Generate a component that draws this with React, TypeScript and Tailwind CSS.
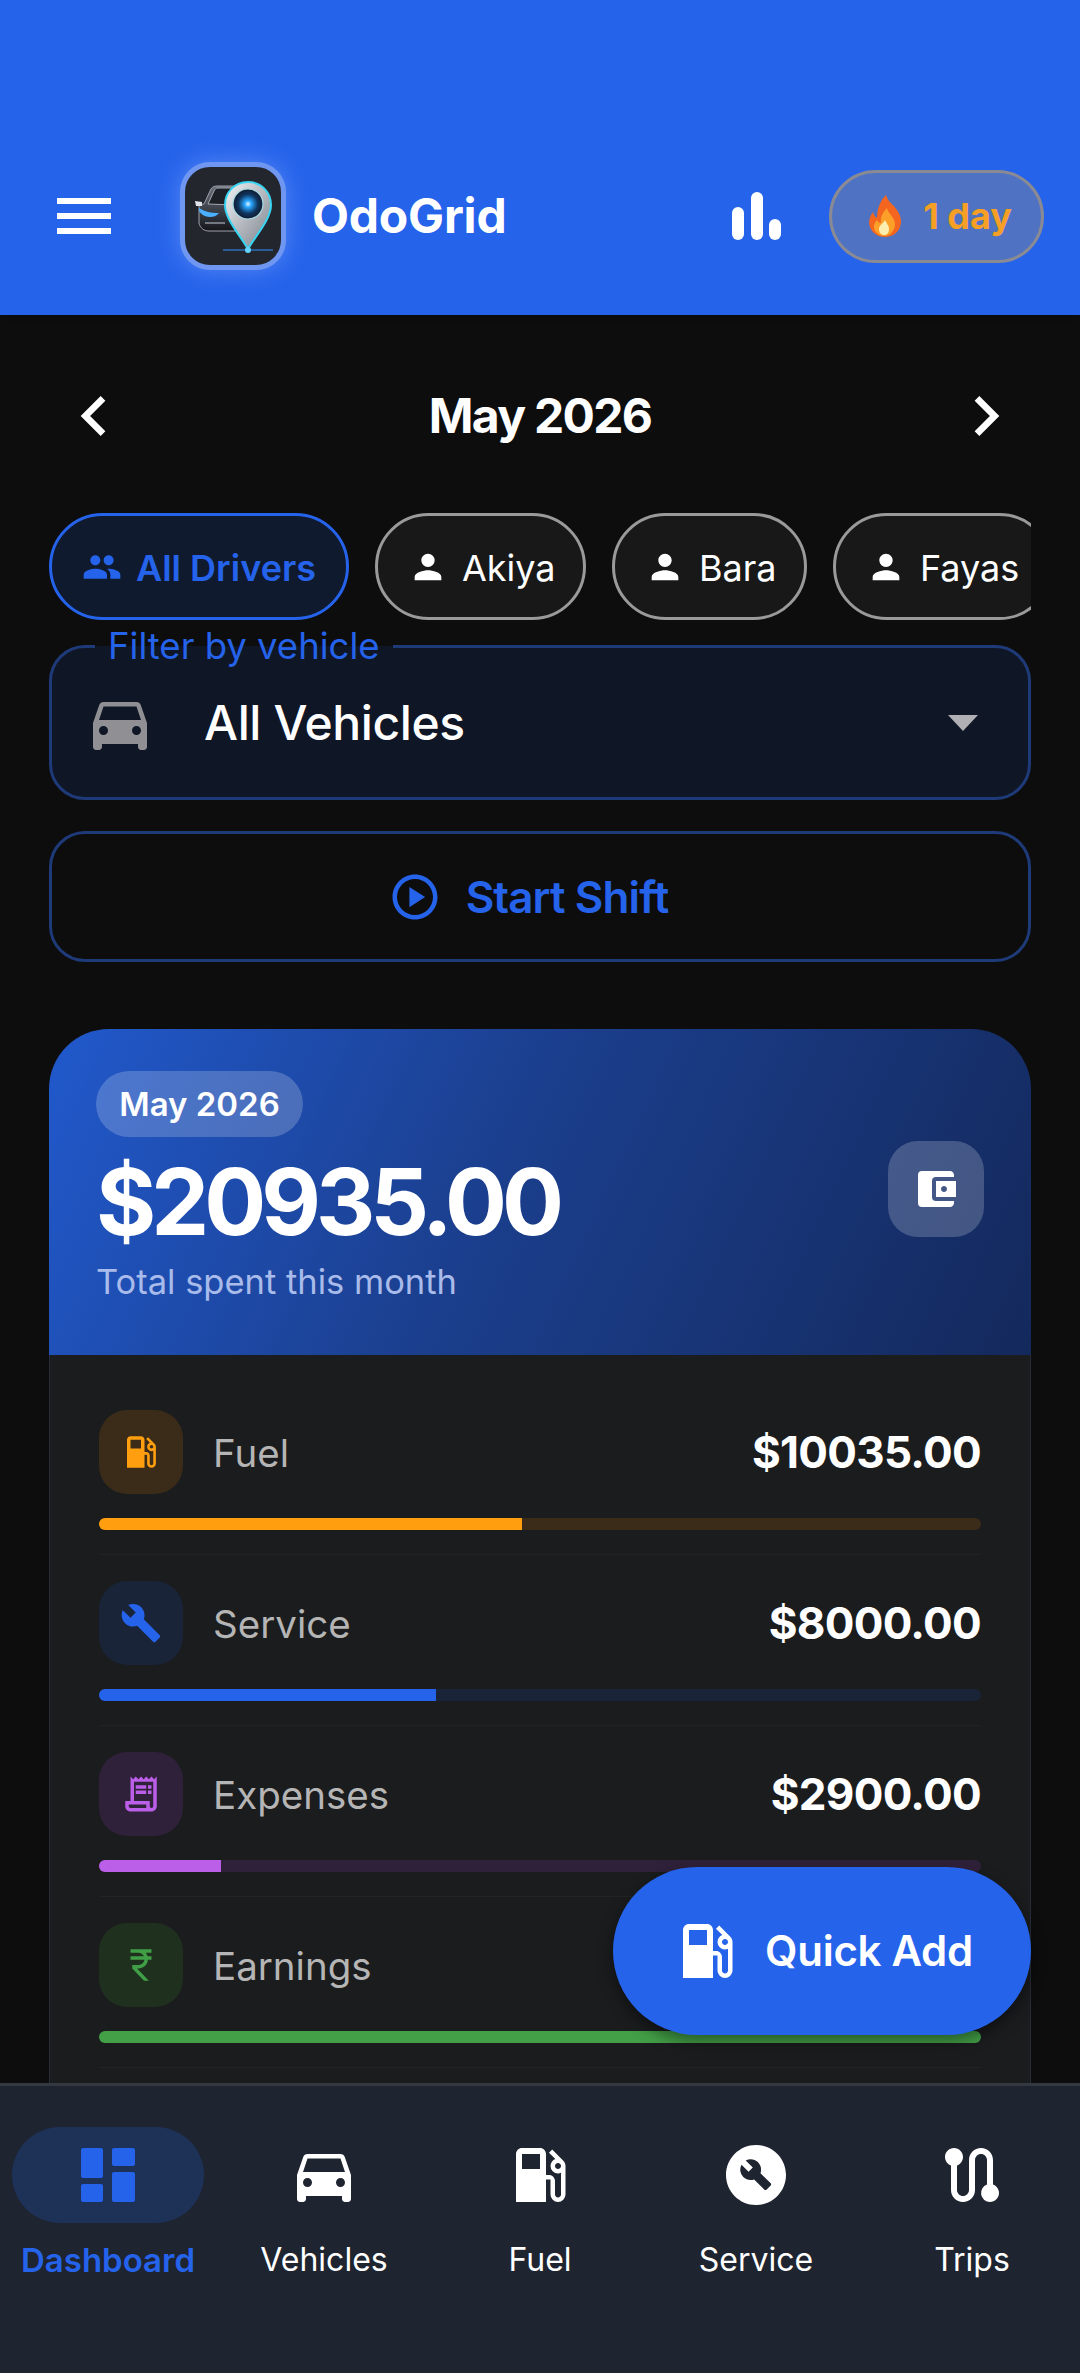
import React from "react";
import {
  MdMenu, MdChevronLeft, MdChevronRight, MdPeople, MdPerson, MdDirectionsCar, MdOutlinePlayCircle,
  MdAccountBalanceWallet, MdLocalGasStation, MdBuild, MdOutlineReceiptLong, MdCurrencyRupee,
  MdRoute, MdBuildCircle,
} from "react-icons/md";

function Logo() {
  return (
    <div className="w-[106px] h-[108px] rounded-[30px] border-[5px] border-[#6f97f2] bg-[#24262e] shadow-[0_0_24px_rgba(147,180,255,0.45)] overflow-hidden shrink-0">
      <svg viewBox="0 0 96 98" className="w-full h-full">
        <defs>
          <linearGradient id="pinG" x1="0" y1="0" x2="1" y2="1">
            <stop offset="0" stopColor="#f2f4f6" />
            <stop offset="1" stopColor="#787e88" />
          </linearGradient>
          <radialGradient id="glow">
            <stop offset="0" stopColor="#e4f8ff" />
            <stop offset="0.22" stopColor="#2aa8ff" />
            <stop offset="0.65" stopColor="#0f3560" />
            <stop offset="1" stopColor="#111a2c" />
          </radialGradient>
          <linearGradient id="carB" x1="0" y1="0" x2="0" y2="1">
            <stop offset="0" stopColor="#6a707b" />
            <stop offset="0.55" stopColor="#3a3e47" />
            <stop offset="1" stopColor="#14161b" />
          </linearGradient>
        </defs>
        <path d="M14 38l5-1 6-13c1-3 3-5 7-5h16c3 0 5 2 6 5l4 12v25l-5 3H24c-5 0-9-3-10-8z" fill="url(#carB)" stroke="#9ca1aa" strokeWidth="1" />
        <path d="M23 37l6-13c1-2 2-3 4-3h14l5 6-2 11z" fill="#1d2026" stroke="#a3a8b0" strokeWidth="1" />
        <path d="M14 41c6 4 12 5 20 5-3 3-5 4-9 4-5 0-9-3-11-6z" fill="#4ab0ff" />
        <path d="M10 34l7 1v4h-6z" fill="#e2e5e9" />
        <path d="M20 56h20" stroke="#8f949c" strokeWidth="1.5" />
        <path d="M63 15C50 15 40 25 40 38C40 52 55 68 63 82C71 68 86 52 86 38C86 25 76 15 63 15Z" fill="url(#pinG)" stroke="#38d4f2" strokeWidth="2" />
        <circle cx="63" cy="37" r="15" fill="url(#glow)" stroke="#a7dcea" strokeWidth="1.2" />
        <path d="M38 83h50" stroke="#2f8fff" strokeWidth="1.2" />
        <circle cx="63" cy="83" r="3" fill="#65d5ff" />
      </svg>
    </div>
  );
}

function Flame() {
  return (
    <svg viewBox="0 0 36 44" className="w-[36px] h-[44px] shrink-0">
      <path d="M19 1c2 7 7 9 11 15 4 6 5 11 3 17-2 6-8 10-15 10S5 39 3 33c-2-6 0-11 3-15 1 3 2 5 4 6 0-9 3-17 9-23z" fill="#f4661f" />
      <path d="M20 14c1 5 5 7 7 12 2 4 1 9-2 12-2 3-5 4-8 4s-7-2-9-5c-2-4-1-8 2-11 1 2 2 3 4 3-1-6 2-11 6-15z" fill="#fca02a" />
      <path d="M18 26c1 3 4 5 4 9 0 4-2 6-5 6s-5-3-5-6c0-4 4-5 6-9z" fill="#fdeeb0" />
    </svg>
  );
}

function Chip({ label, active, width }: { label: string; active?: boolean; width: string }) {
  return (
    <div
      className={
        "h-[107px] shrink-0 rounded-[54px] border-[3px] flex items-center gap-[14px] pl-[30px] " +
        width +
        (active ? " border-[#2563eb] bg-[#0f1a2e] text-[#2563eb] font-semibold" : " border-[#9a9a9a] bg-[#181818] text-white font-normal")
      }
    >
      {active ? <MdPeople className="w-[40px] h-[40px]" /> : <MdPerson className="w-[40px] h-[40px]" />}
      <span className="text-[36px] leading-none pt-[2px]">{label}</span>
    </div>
  );
}

function Row({
  icon, label, value, color, tint, track, pct,
}: {
  icon: React.ReactNode; label: string; value?: string; color: string; tint: string; track: string; pct: string;
}) {
  return (
    <div className="h-[171px] pt-[26px] border-b border-[#212325]">
      <div className="flex items-center h-[84px]">
        <div className={"w-[84px] h-[84px] rounded-[28px] flex items-center justify-center " + tint}>{icon}</div>
        <span className="ml-[30px] text-[38.5px] leading-none text-[#b5b5b5] flex-1 pt-[2px]">{label}</span>
        {value && <span className="text-[44px] leading-none font-bold text-white -tracking-[0.7px]">{value}</span>}
      </div>
      <div className={"mt-[24px] h-[12px] rounded-full overflow-hidden " + track}>
        <div className={"h-full " + color} style={{ width: pct }} />
      </div>
    </div>
  );
}

function NavItem({ icon, label, active }: { icon: React.ReactNode; label: string; active?: boolean }) {
  return (
    <div className="flex-1 flex flex-col items-center">
      <div className={"w-[192px] h-[96px] rounded-[48px] flex items-center justify-center " + (active ? "bg-[#1e3157] text-[#2563eb]" : "text-white")}>
        {icon}
      </div>
      <span className={"mt-[17px] leading-[40px] " + (active ? "text-[33px] text-[#2563eb] font-semibold" : "text-[32px] text-white")}>{label}</span>
    </div>
  );
}

export default function App() {
  return (
    <div className="w-[1080px] h-[2373px] relative overflow-hidden flex flex-col bg-[#0d0d0d] text-white font-['Inter','Liberation_Sans',sans-serif]">
      <header className="h-[315px] shrink-0 bg-[#2563eb] flex items-center pt-[117px] pl-[48px] pr-[36px] shadow-[0_2px_4px_rgba(0,0,0,0.3)]">
        <MdMenu className="w-[72px] h-[72px] text-white shrink-0" />
        <div className="ml-[60px]"><Logo /></div>
        <span className="ml-[26px] text-[48px] leading-none font-bold flex-1 -tracking-[0.2px]">OdoGrid</span>
        <svg viewBox="0 0 50 48" className="w-[50px] h-[48px] mr-[47px] fill-white">
          <rect x="0" y="15" width="12" height="33" rx="6" />
          <rect x="19" y="0" width="12" height="48" rx="6" />
          <rect x="37" y="27" width="12" height="21" rx="6" />
        </svg>
        <div className="w-[215px] h-[93px] rounded-[47px] border-[3px] border-[#8a8a94] bg-[#4f73c2] flex items-center justify-center gap-[20px] pl-[6px]">
          <Flame />
          <span className="text-[36px] leading-none font-bold text-[#f5a025]">1 day</span>
        </div>
      </header>

      <main className="flex-1 min-h-0 overflow-hidden px-[49px]">
        <div className="h-[198px] flex items-center justify-between pl-[5px] pr-[5px] pt-[4px]">
          <MdChevronLeft className="w-[80px] h-[80px]" />
          <span className="text-[48px] leading-none font-bold -tracking-[1.7px]">May 2026</span>
          <MdChevronRight className="w-[80px] h-[80px]" />
        </div>

        <div className="flex gap-[26px] overflow-hidden">
          <Chip label="All Drivers" active width="w-[300px]" />
          <Chip label="Akiya" width="w-[211px]" />
          <Chip label="Bara" width="w-[195px]" />
          <Chip label="Fayas" width="w-[220px]" />
        </div>

        <div className="relative mt-[25px] h-[155px] rounded-[36px] border-[3px] border-[#1e3a78] bg-[#0f1626] flex items-center pl-[32px] pr-[50px]">
          <span className="absolute left-[43px] -top-[24px] px-[13px] text-[36.5px] leading-[44px] text-[#2563eb] bg-[linear-gradient(to_bottom,#0d0d0d_50%,#0f1626_50%)]">Filter by vehicle</span>
          <MdDirectionsCar className="w-[72px] h-[72px] text-[#8f8f94]" />
          <span className="ml-[48px] text-[48px] leading-none font-medium flex-1 -tracking-[0.4px]">All Vehicles</span>
          <div className="w-0 h-0 border-l-[15px] border-r-[15px] border-t-[16px] border-l-transparent border-r-transparent border-t-[#b0b0b4]" />
        </div>

        <div className="mt-[31px] h-[131px] rounded-[36px] border-[3px] border-[#1e3a78] flex items-center justify-center gap-[24px] pr-[24px] text-[#2563eb]">
          <MdOutlinePlayCircle className="w-[54px] h-[54px]" />
          <span className="text-[44px] leading-none font-semibold -tracking-[0.9px]">Start Shift</span>
        </div>

        <section className="mt-[67px] rounded-t-[60px] overflow-hidden">
          <div className="h-[326px] bg-[linear-gradient(115deg,#2159cc_0%,#1b3f8e_45%,#14295c_100%)] pl-[47px] pr-[47px] pt-[42px] flex justify-between">
            <div>
              <div className="w-[207px] h-[66px] rounded-[33px] bg-white/20 flex items-center justify-center text-[33px] font-semibold leading-none">May 2026</div>
              <div className="mt-[19px] text-[92px] leading-[92px] font-bold -tracking-[5px]">$20935.00</div>
              <div className="mt-[14px] text-[34.5px] leading-[40px] text-[#a9bbea]">Total spent this month</div>
            </div>
            <div className="mt-[70px] w-[96px] h-[96px] rounded-[30px] bg-white/20 flex items-center justify-center">
              <MdAccountBalanceWallet className="w-[48px] h-[48px]" />
            </div>
          </div>
          <div className="bg-[#1b1c1e] border-x border-[#252c3c] px-[49px] pt-[29px] h-[800px]">
            <Row icon={<MdLocalGasStation className="w-[42px] h-[42px] text-[#ff9f10]" />} label="Fuel" value="$10035.00" color="bg-[#ff9f10]" tint="bg-[#3a2c18]" track="bg-[#3a2c18]" pct="48%" />
            <Row icon={<MdBuild className="w-[42px] h-[42px] text-[#2563eb]" />} label="Service" value="$8000.00" color="bg-[#2563eb]" tint="bg-[#1a2438]" track="bg-[#1a2438]" pct="38.2%" />
            <Row icon={<MdOutlineReceiptLong className="w-[42px] h-[42px] text-[#bb5ee8]" />} label="Expenses" value="$2900.00" color="bg-[#bb5ee8]" tint="bg-[#30213a]" track="bg-[#30213a]" pct="13.8%" />
            <Row icon={<MdCurrencyRupee className="w-[42px] h-[42px] text-[#3f9e46]" />} label="Earnings" color="bg-[#43a047]" tint="bg-[#20301f]" track="bg-[#20301f]" pct="100%" />
          </div>
        </section>
      </main>

      <nav className="h-[290px] shrink-0 bg-[#1e2430] border-t-[3px] border-[#333841] flex pt-[41px] px-0 relative">
        <NavItem
          active
          label="Dashboard"
          icon={
            <svg viewBox="0 0 54 54" className="w-[54px] h-[54px] fill-[#2563eb]">
              <rect x="0" y="0" width="22" height="30" rx="2" />
              <rect x="0" y="36" width="22" height="18" rx="2" />
              <rect x="31" y="0" width="23" height="18" rx="2" />
              <rect x="31" y="24" width="23" height="30" rx="2" />
            </svg>
          }
        />
        <NavItem label="Vehicles" icon={<MdDirectionsCar className="w-[72px] h-[72px]" />} />
        <NavItem label="Fuel" icon={<MdLocalGasStation className="w-[72px] h-[72px]" />} />
        <NavItem label="Service" icon={<MdBuildCircle className="w-[72px] h-[72px]" />} />
        <NavItem label="Trips" icon={<MdRoute className="w-[72px] h-[72px]" />} />
      </nav>

      <button className="absolute left-[613px] top-[1867px] w-[418px] h-[168px] rounded-[84px] bg-[#2563eb] flex items-center justify-center gap-[22px] shadow-[0_6px_16px_rgba(0,0,0,0.45)]">
        <MdLocalGasStation className="w-[72px] h-[72px] text-white" />
        <span className="text-[42px] leading-none font-semibold text-white -tracking-[0.3px]">Quick Add</span>
      </button>
    </div>
  );
}
